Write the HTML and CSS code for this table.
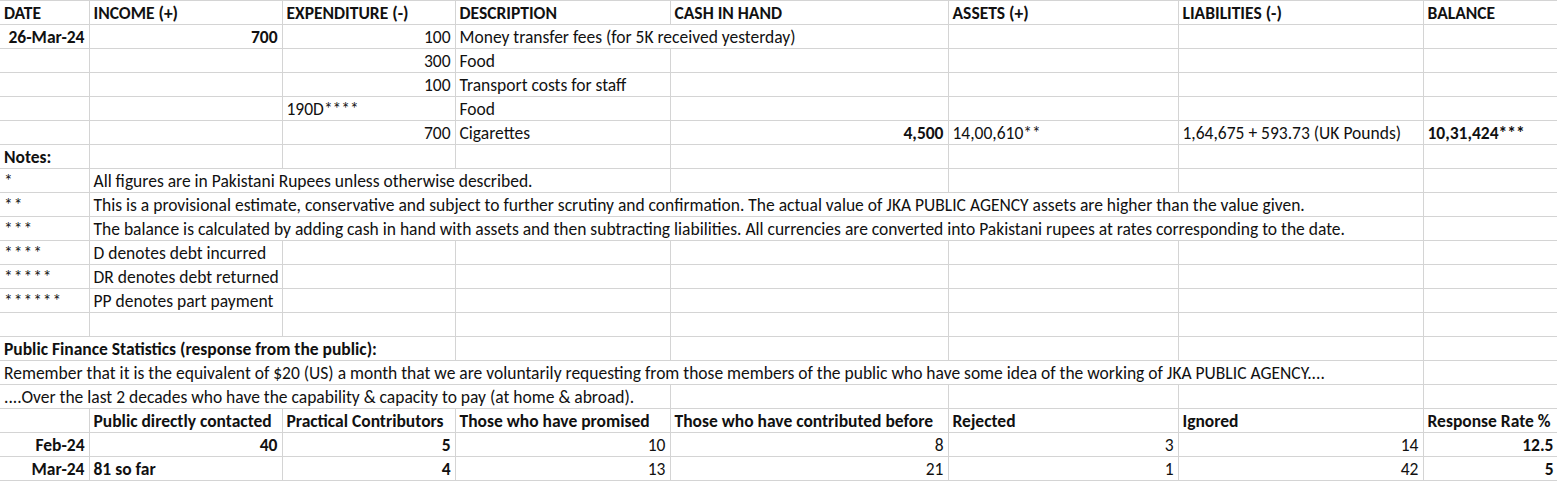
FILE: index.html
```html
<!DOCTYPE html>
<html lang="en">
<head>
    <meta charset="UTF-8">
    <meta name="viewport" content="width=device-width, initial-scale=1.0">
    <title>JKA Public Agency - Accounts</title>
    <link rel="stylesheet" href="styles.css">
</head>
<body>
    <table class="sheet">
        <colgroup>
            <col class="c-date">
            <col class="c-income">
            <col class="c-exp">
            <col class="c-desc">
            <col class="c-cash">
            <col class="c-assets">
            <col class="c-liab">
            <col class="c-bal">
        </colgroup>
        <tr class="head">
            <td>DATE</td>
            <td>INCOME (+)</td>
            <td>EXPENDITURE (-)</td>
            <td>DESCRIPTION</td>
            <td>CASH IN HAND</td>
            <td>ASSETS (+)</td>
            <td>LIABILITIES (-)</td>
            <td>BALANCE</td>
        </tr>
        <tr>
            <td class="num bold">26-Mar-24</td>
            <td class="num bold">700</td>
            <td class="num">100</td>
            <td colspan="2">Money transfer fees (for 5K received yesterday)</td>
            <td></td>
            <td></td>
            <td></td>
        </tr>
        <tr>
            <td></td>
            <td></td>
            <td class="num">300</td>
            <td>Food</td>
            <td></td>
            <td></td>
            <td></td>
            <td></td>
        </tr>
        <tr>
            <td></td>
            <td></td>
            <td class="num">100</td>
            <td>Transport costs for staff</td>
            <td></td>
            <td></td>
            <td></td>
            <td></td>
        </tr>
        <tr>
            <td></td>
            <td></td>
            <td>190D****</td>
            <td>Food</td>
            <td></td>
            <td></td>
            <td></td>
            <td></td>
        </tr>
        <tr>
            <td></td>
            <td></td>
            <td class="num">700</td>
            <td>Cigarettes</td>
            <td class="num bold">4,500</td>
            <td>14,00,610**</td>
            <td>1,64,675 + 593.73 (UK Pounds)</td>
            <td class="bold">10,31,424***</td>
        </tr>
        <tr>
            <td class="bold">Notes:</td>
            <td></td>
            <td></td>
            <td></td>
            <td></td>
            <td></td>
            <td></td>
            <td></td>
        </tr>
        <tr>
            <td class="star">*</td>
            <td colspan="3">All figures are in Pakistani Rupees unless otherwise described.</td>
            <td></td>
            <td></td>
            <td></td>
            <td></td>
        </tr>
        <tr>
            <td class="star">**</td>
            <td colspan="6">This is a provisional estimate, conservative and subject to further scrutiny and confirmation. The actual value of JKA PUBLIC AGENCY assets are higher than the value given.</td>
            <td></td>
        </tr>
        <tr>
            <td class="star">***</td>
            <td colspan="6">The balance is calculated by adding cash in hand with assets and then subtracting liabilities. All currencies are converted into Pakistani rupees at rates corresponding to the date.</td>
            <td></td>
        </tr>
        <tr>
            <td class="star">****</td>
            <td>D denotes debt incurred</td>
            <td></td>
            <td></td>
            <td></td>
            <td></td>
            <td></td>
            <td></td>
        </tr>
        <tr>
            <td class="star">*****</td>
            <td>DR denotes debt returned</td>
            <td></td>
            <td></td>
            <td></td>
            <td></td>
            <td></td>
            <td></td>
        </tr>
        <tr>
            <td class="star">******</td>
            <td>PP denotes part payment</td>
            <td></td>
            <td></td>
            <td></td>
            <td></td>
            <td></td>
            <td></td>
        </tr>
        <tr>
            <td></td>
            <td></td>
            <td></td>
            <td></td>
            <td></td>
            <td></td>
            <td></td>
            <td></td>
        </tr>
        <tr>
            <td colspan="3" class="bold">Public Finance Statistics (response from the public):</td>
            <td></td>
            <td></td>
            <td></td>
            <td></td>
            <td></td>
        </tr>
        <tr>
            <td colspan="7">Remember that it is the equivalent of $20 (US) a month that we are voluntarily requesting from those members of the public who have some idea of the working of JKA PUBLIC AGENCY....</td>
            <td></td>
        </tr>
        <tr>
            <td colspan="4">....Over the last 2 decades who have the capability &amp; capacity to pay (at home &amp; abroad).</td>
            <td></td>
            <td></td>
            <td></td>
            <td></td>
        </tr>
        <tr class="bold">
            <td></td>
            <td>Public directly contacted</td>
            <td>Practical Contributors</td>
            <td>Those who have promised</td>
            <td>Those who have contributed before</td>
            <td>Rejected</td>
            <td>Ignored</td>
            <td>Response Rate %</td>
        </tr>
        <tr>
            <td class="num bold">Feb-24</td>
            <td class="num bold">40</td>
            <td class="num bold">5</td>
            <td class="num">10</td>
            <td class="num">8</td>
            <td class="num">3</td>
            <td class="num">14</td>
            <td class="num bold">12.5</td>
        </tr>
        <tr>
            <td class="num bold">Mar-24</td>
            <td class="bold">81 so far</td>
            <td class="num bold">4</td>
            <td class="num">13</td>
            <td class="num">21</td>
            <td class="num">1</td>
            <td class="num">42</td>
            <td class="num bold">5</td>
        </tr>
    </table>
</body>
</html>
```

FILE: styles.css
```css
body {
    margin: 0;
    background-color: #ffffff;
    font-family: Carlito, Calibri, Lato, sans-serif;
    font-size: 17.5px;
    color: #111;
    overflow: hidden;
}
.sheet {
    border-collapse: collapse;
    table-layout: fixed;
    width: 1558px;
}
.c-date { width: 89px; }
.c-income { width: 193px; }
.c-exp { width: 173px; }
.c-desc { width: 215px; }
.c-cash { width: 278px; }
.c-assets { width: 230px; }
.c-liab { width: 245px; }
.c-bal { width: 135px; }
.sheet td {
    height: 22px;
    padding: 0 4px 1px 4px;
    border: 1px solid #d4d4d4;
    line-height: 20px;
    vertical-align: bottom;
    white-space: nowrap;
    overflow: hidden;
}
.sheet td:first-child {
    border-left: none;
}
.head td {
    font-weight: bold;
}
.bold {
    font-weight: bold;
}
.num {
    text-align: right;
}
.star {
    letter-spacing: 1px;
}
```
